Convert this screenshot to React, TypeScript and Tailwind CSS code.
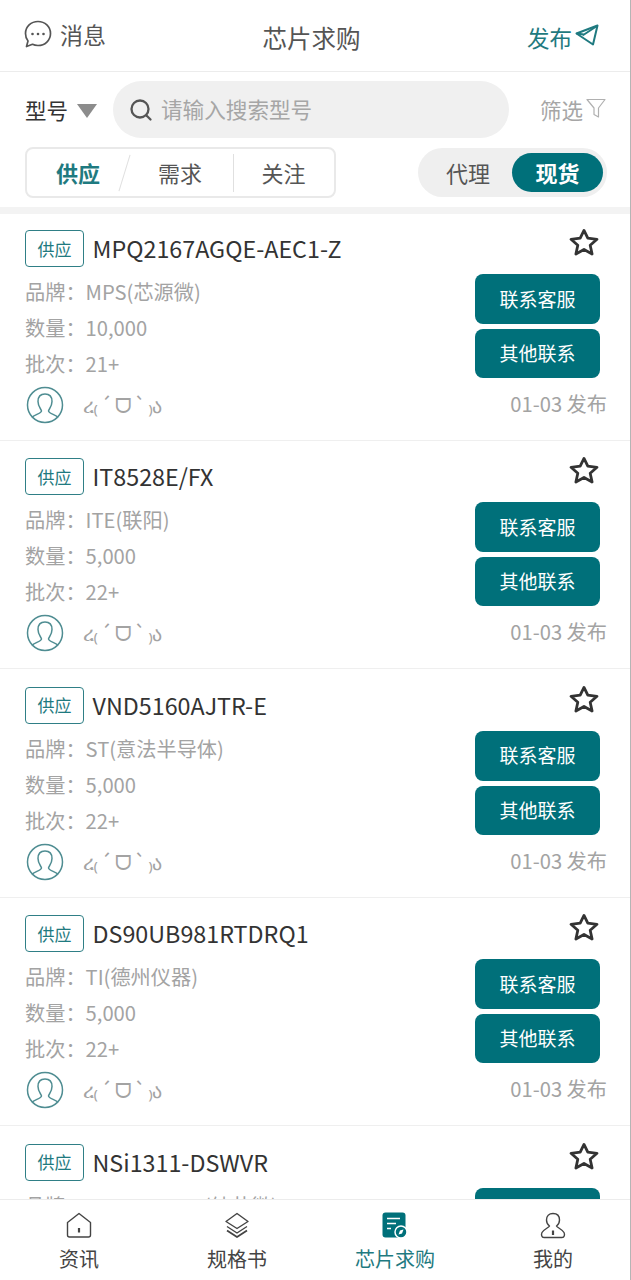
import React from "react";

const FONT = '"Noto Sans CJK SC", "Noto Sans", sans-serif';

const items = [
  { name: "MPQ2167AGQE-AEC1-Z", brand: "MPS(芯源微)", qty: "10,000", batch: "21+" },
  { name: "IT8528E/FX", brand: "ITE(联阳)", qty: "5,000", batch: "22+" },
  { name: "VND5160AJTR-E", brand: "ST(意法半导体)", qty: "5,000", batch: "22+" },
  { name: "DS90UB981RTDRQ1", brand: "TI(德州仪器)", qty: "5,000", batch: "22+" },
  { name: "NSi1311-DSWVR", brand: "NOVOSENSE(纳芯微)", qty: "5,000", batch: "22+" },
];

function Star() {
  return (
    <svg width="30" height="28" viewBox="0 0 30 28" fill="none" stroke="#333" strokeWidth="2.8" strokeLinejoin="round">
      <path d="M15 2.4 18.8 10.200 28 11.300 21.200 17.200 23.100 26 15 21.500 6.900 26 8.800 17.200 2 11.300 11.200 10.200Z" />
    </svg>
  );
}

function Avatar() {
  return (
    <svg width="38" height="38" viewBox="0 0 38 38" fill="none" stroke="#4f8d92" strokeWidth="1.5">
      <circle cx="19" cy="19" r="17.5" />
      <path d="M6 31.500c2-3 9-3.500 9.500-6.500 0-1.500-3.500-4-3.500-9.500 0-5 3-7.500 7-7.500s7 2.500 7 7.500c0 5.500-3.500 8-3.500 9.500.5 3 7.500 3.500 9.500 6.500" />
    </svg>
  );
}

function Card({ item }: { item: (typeof items)[number] }) {
  return (
    <div className="h-[228.5px] first:h-[226.5px] pt-[17.5px] first:pt-[16px] shrink-0 border-b border-[#efefef] pl-[25px] pr-[23px] flex justify-between">
      <div className="flex flex-col">
        <div className="flex items-center h-[37px]">
          <div className="w-[59px] h-[37px] border border-[#2f7f86] rounded-[4px] flex items-center justify-center text-[17px] text-[#1f7a80]">供应</div>
          <div className="ml-[8.5px] text-[23.3px] leading-[37px] text-[#333] whitespace-nowrap">{item.name}</div>
        </div>
        <div className="mt-[7px] text-[20.2px] leading-[36px] text-[#a3a3a3]">
          <div>品牌：{item.brand}</div>
          <div>数量：{item.qty}</div>
          <div>批次：{item.batch}</div>
        </div>
        <div className="flex items-center mt-[4px] ml-[1px]">
          <Avatar />
          <span className="ml-[19px] text-[20px] tracking-[-1px] text-[#a3a3a3] whitespace-nowrap">ረ₍ ´ ᗜ ` ₎ა</span>
        </div>
      </div>
      <div className="flex flex-col items-end">
        <div className="-mt-[2px] mr-[8px]"><Star /></div>
        <button className="mt-[18px] mr-[7px] w-[125px] h-[50px] shrink-0 rounded-[8px] bg-[#00707a] text-white text-[19px]">联系客服</button>
        <button className="mt-[5px] mr-[7px] w-[125px] h-[49px] shrink-0 rounded-[8px] bg-[#00707a] text-white text-[19px]">其他联系</button>
        <div className="mt-[11px] text-[20.2px] text-[#a3a3a3] leading-[30px]">01-03 发布</div>
      </div>
    </div>
  );
}

function TabItem({ label, active, icon }: { label: string; active?: boolean; icon: React.ReactNode }) {
  return (
    <div className="flex flex-col items-center">
      <div className="h-[28px] flex items-center justify-center mt-[11px]">{icon}</div>
      <div className={"mt-[5px] text-[20px] leading-[30px] whitespace-nowrap " + (active ? "text-[#1f7a80]" : "text-[#444]")}>{label}</div>
    </div>
  );
}

export default function App() {
  return (
    <div className="w-[631px] h-[1280px] bg-white flex flex-col overflow-hidden border-r border-r-[#b5b5b5]" style={{ fontFamily: FONT }}>
      <header className="h-[72px] shrink-0 border-b border-[#ececec] grid grid-cols-[1fr_auto_1fr] items-center pl-[24px] pr-[31px]">
        <div className="flex items-center -mt-[1px] pb-[2px]">
          <svg width="28" height="28" viewBox="0 0 28 28" fill="none" stroke="#555" strokeWidth="1.7">
            <path d="M14 1.500c7 0 12.500 5.300 12.500 12s-5.500 12-12.500 12c-2 0-4-.4-5.500-1.200L2.500 26.500l1.500-5.500C2.300 19 1.500 16.500 1.500 13.500c0-6.700 5.500-12 12.500-12Z" strokeLinejoin="round" />
            <circle cx="8.500" cy="14" r="1.300" fill="#555" stroke="none" />
            <circle cx="14" cy="14" r="1.300" fill="#555" stroke="none" />
            <circle cx="19.500" cy="14" r="1.300" fill="#555" stroke="none" />
          </svg>
          <span className="ml-[8px] text-[23px] leading-[30px] text-[#555]">消息</span>
        </div>
        <div className="text-[24.5px] text-[#555] leading-[32px] pt-[4px]">芯片求购</div>
        <div className="flex items-center justify-end pt-[2px]">
          <span className="text-[22.5px] leading-[32px] text-[#1f7a80]">发布</span>
          <svg width="24" height="22" viewBox="0 0 24 22" fill="none" stroke="#1f7a80" strokeWidth="2" strokeLinejoin="round" className="-mt-[4px] ml-[3px]">
            <path d="M22.500 1.500 1.500 9.500 18 20.500 22.500 1.500Z" />
            <path d="M22 2 7.500 11.500 M1.500 9.500 9 10.500" />
          </svg>
        </div>
      </header>

      <div className="h-[75px] shrink-0 flex items-center pl-[25px] pr-[23px]">
        <span className="text-[21.5px] text-[#333] leading-[30px]">型号</span>
        <svg width="20" height="14" viewBox="0 0 20 14" className="ml-[9px] mt-[2px]"><path d="M0 0h20L10 14Z" fill="#8c8c8c" /></svg>
        <div className="ml-[16px] w-[396px] h-[57px] rounded-full bg-[#f0f0f0] flex items-center pl-[16px]">
          <svg width="24" height="24" viewBox="0 0 24 24" fill="none" stroke="#555" strokeWidth="2.3" strokeLinecap="round"><circle cx="11" cy="11" r="8.500" /><path d="M17.500 17.500 21.500 21.500" /></svg>
          <span className="ml-[8px] text-[21.6px] text-[#a6a6a6]">请输入搜索型号</span>
        </div>
        <div className="ml-auto flex items-center mr-[1px]">
          <span className="text-[21.5px] text-[#a6a6a6] pt-[1px]">筛选</span>
          <svg width="20" height="20" viewBox="0 0 20 20" fill="none" stroke="#b0b0b0" strokeWidth="1.2" strokeLinejoin="round" className="-mt-[4px] ml-[3px]"><path d="M1 1.500h18L12.500 10v9L8 16.500V10Z" /></svg>
        </div>
      </div>

      <div className="h-[60px] shrink-0 flex items-start justify-between pl-[25px] pr-[23px]">
        <div className="w-[311px] h-[51px] border-2 border-[#e9e9e9] rounded-[8px] flex items-center text-[22px]">
          <div className="w-[97px] pl-[5px] text-center font-bold text-[#1f7a80]">供应</div>
          <div className="w-[1px] h-[38px] bg-[#e0e0e0] rotate-[17deg]" />
          <div className="w-[108px] pl-[2px] text-center text-[#555]">需求</div>
          <div className="w-[1px] h-[38px] bg-[#e0e0e0]" />
          <div className="flex-1 text-center text-[#555] pr-[1px]">关注</div>
        </div>
        <div className="w-[189px] h-[49px] mt-[1px] rounded-full bg-[#efefef] flex items-center px-[4px] text-[22px]">
          <div className="flex-1 text-center text-[#555] pl-[2px]">代理</div>
          <div className="w-[91px] h-[39px] rounded-full bg-[#00707a] text-white font-bold flex items-center justify-center">现货</div>
        </div>
      </div>

      <div className="h-[7px] shrink-0 bg-[#f3f3f3]" />

      <main className="flex-1 min-h-0 overflow-hidden">
        {items.map((item) => <Card key={item.name} item={item} />)}
      </main>

      <nav className="h-[81px] shrink-0 border-t border-[#ececec] bg-white grid grid-cols-[repeat(4,158px)] overflow-hidden">
        <TabItem label="资讯" icon={
          <svg width="26" height="26" viewBox="0 0 26 26" fill="none" stroke="#444" strokeWidth="1.400" strokeLinejoin="round"><path d="M13 1.500 1.500 10.500V23a2 2 0 0 0 2 2h19a2 2 0 0 0 2-2V10.500Z" /><path d="M13 16v4.500" strokeWidth="2.200" /></svg>
        } />
        <TabItem label="规格书" icon={
          <svg width="26" height="26" viewBox="0 0 26 26" fill="none" stroke="#444" strokeWidth="1.400" strokeLinejoin="round"><path d="M13 1.500 24 9.500 13 16.500 2 9.500Z" /><path d="M3 14.500 13 21 23 14.500" /><path d="M3 18.500 13 25 23 18.500" strokeWidth="1.800" /></svg>
        } />
        <TabItem label="芯片求购" active icon={
          <svg width="26" height="27" viewBox="0 0 26 27"><rect x="0.500" y="0.500" width="23" height="25" rx="3" fill="#00707a" /><path d="M5 6.500h13M5 11.500h9M5 16.500h4" stroke="#fff" strokeWidth="1.500" /><circle cx="19" cy="20" r="6" fill="#00707a" stroke="#fff" strokeWidth="1.500" /><path d="M16.500 22.500 18 18.500 21.500 17.500 20 21.500Z" fill="#fff" /></svg>
        } />
        <TabItem label="我的" icon={
          <svg width="26" height="27" viewBox="0 0 26 27" fill="none" stroke="#444" strokeWidth="1.400" strokeLinejoin="round"><path d="M13 1.500c4 0 6.500 2.500 6.500 6.500 0 3-1.500 5-3 6 .5 1.500 6 3.500 7.500 6.500 1 2 .5 5-2 5H4c-2.500 0-3-3-2-5 1.500-3 7-5 7.500-6.500-1.500-1-3-3-3-6 0-4 2.500-6.500 6.500-6.500Z" /><path d="M13 18.500v4.500" strokeWidth="2.200" /></svg>
        } />
      </nav>
    </div>
  );
}
